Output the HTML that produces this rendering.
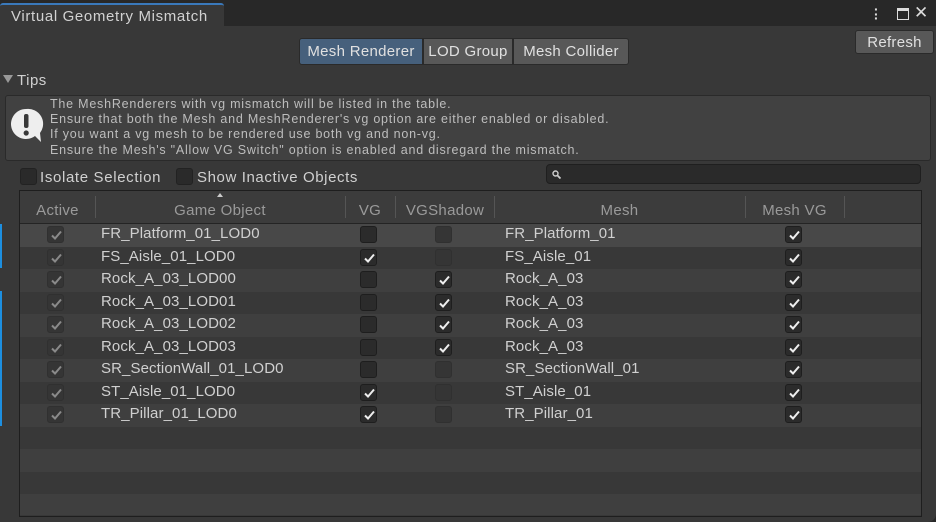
<!DOCTYPE html>
<html><head><meta charset="utf-8"><style>
*{box-sizing:border-box;margin:0;padding:0}
body{width:936px;height:522px;background:#282828;font-family:"Liberation Sans","DejaVu Sans",sans-serif;color:#c4c4c4;position:relative;overflow:hidden}
.a{position:absolute}
.win{left:0;top:26px;width:936px;height:496px;background:#383838;border-bottom-right-radius:8px}
.tab{left:0;top:3px;width:224px;height:24px;background:#383838;border-top:2px solid #3a79bb;border-radius:3px 3px 0 0;font-size:15px;color:#d2d2d2;padding:3px 0 0 11px;letter-spacing:0.65px}
.btn{background:#585858;border:1px solid #2a2a2a;color:#e0e0e0;font-size:15px;text-align:center;line-height:25px;height:27px;top:38px;letter-spacing:0.3px}
.tips{left:5px;top:95px;width:926px;height:66px;background:#414141;border:1px solid #2a2a2a;border-radius:3px}
.tt{left:50px;top:97px;font-size:12.5px;line-height:15.2px;color:#bdbdbd;letter-spacing:0.78px}
.cb{width:17px;height:17px;background:#2a2a2a;border:1px solid #222;border-radius:3px}
.tbl{left:19px;top:190px;width:903px;height:327px;border:1px solid #1e1e1e;background:#383838}
.hd{left:20px;top:191px;width:901px;height:33px;background:#3c3c3c;border-bottom:1px solid #242424}
.hl{font-size:15px;color:#9a9a9a;top:202px;text-align:center;letter-spacing:0.3px}
.sep{top:196px;width:1px;height:22px;background:#555}
.row{left:20px;width:901px;height:22.5px}
.tx{font-size:15px;color:#d0d0d0;letter-spacing:0.1px}
.ck{width:17px;height:17px;background:#2b2b2b;border:1px solid #1e1e1e;border-radius:3px}
.dk{background:#353535;border-color:#303030}
.ck svg{position:absolute;left:1px;top:1px}
</style></head><body>
<div class="a tab">Virtual Geometry Mismatch</div>
<div class="a" style="left:874px;top:7px;width:3px;height:14px;color:#ddd;font-size:14px;line-height:4.5px;font-weight:bold">·<br>·<br>·</div>
<div class="a" style="left:897px;top:8px;width:12px;height:12px;border:1.5px solid #ddd;border-top-width:3px"></div>
<div class="a" style="left:914px;top:3px;font-size:17px;color:#ddd">✕</div>
<div class="a win"></div>
<div class="a btn" style="left:299px;width:124px;background:#46607c;border-radius:3px 0 0 3px">Mesh Renderer</div>
<div class="a btn" style="left:423px;width:90px">LOD Group</div>
<div class="a btn" style="left:513px;width:116px;border-radius:0 3px 3px 0">Mesh Collider</div>
<div class="a btn" style="left:855px;top:30px;width:79px;height:24px;line-height:23px;border-radius:3px;background:#585858">Refresh</div>
<div class="a" style="left:3px;top:75px;width:0;height:0;border-left:5px solid transparent;border-right:5px solid transparent;border-top:8px solid #999"></div>
<div class="a" style="left:17px;top:72px;font-size:15px;color:#d0d0d0;letter-spacing:0.5px">Tips</div>
<div class="a tips"></div>
<svg class="a" style="left:10px;top:107px" width="36" height="38"><path d="M16 2a15 15 0 1 0 9 27l6 6-1-9A15 15 0 0 0 16 2z" fill="#eee"/><rect x="14" y="7" width="4.5" height="14" rx="2" fill="#383838"/><circle cx="16.2" cy="26" r="2.6" fill="#383838"/></svg>
<div class="a tt">The MeshRenderers with vg mismatch will be listed in the table.<br>Ensure that both the Mesh and MeshRenderer's vg option are either enabled or disabled.<br>If you want a vg mesh to be rendered use both vg and non-vg.<br>Ensure the Mesh's "Allow VG Switch" option is enabled and disregard the mismatch.</div>
<div class="a cb" style="left:20px;top:168px"></div>
<div class="a" style="left:40px;top:169px;font-size:15px;color:#d0d0d0;letter-spacing:0.65px">Isolate Selection</div>
<div class="a cb" style="left:176px;top:168px"></div>
<div class="a" style="left:197px;top:169px;font-size:15px;color:#d0d0d0;letter-spacing:0.6px">Show Inactive Objects</div>
<div class="a" style="left:546px;top:164px;width:375px;height:20px;background:#2a2a2a;border:1px solid #1f1f1f;border-radius:4px"></div>
<svg class="a" style="left:552px;top:170px" width="9" height="9"><circle cx="3.5" cy="3.5" r="2.5" stroke="#ccc" stroke-width="1.4" fill="none"/><path d="M5.5 5.5l3 3" stroke="#ccc" stroke-width="1.8"/></svg>
<div class="a tbl"></div>
<div class="a row" style="top:224px;background:#484848"></div>
<div class="a row" style="top:246.5px;background:#383838"></div>
<div class="a row" style="top:269px;background:#3f3f3f"></div>
<div class="a row" style="top:291.5px;background:#383838"></div>
<div class="a row" style="top:314px;background:#3f3f3f"></div>
<div class="a row" style="top:336.5px;background:#383838"></div>
<div class="a row" style="top:359px;background:#3f3f3f"></div>
<div class="a row" style="top:381.5px;background:#383838"></div>
<div class="a row" style="top:404px;background:#3f3f3f"></div>
<div class="a row" style="top:426.5px;background:#383838"></div>
<div class="a row" style="top:449px;background:#3f3f3f"></div>
<div class="a row" style="top:471.5px;background:#383838"></div>
<div class="a row" style="top:494px;height:21px;background:#3f3f3f"></div>
<div class="a hd"></div>
<div class="a hl" style="left:20px;width:75px">Active</div>
<div class="a hl" style="left:95px;width:250px">Game Object</div>
<div class="a" style="left:217px;top:193px;width:0;height:0;border-left:3px solid transparent;border-right:3px solid transparent;border-bottom:4px solid #ccc"></div>
<div class="a hl" style="left:345px;width:50px">VG</div>
<div class="a hl" style="left:395px;width:100px">VGShadow</div>
<div class="a hl" style="left:494px;width:251px">Mesh</div>
<div class="a hl" style="left:745px;width:99px">Mesh VG</div>
<div class="a sep" style="left:95px"></div><div class="a sep" style="left:345px"></div><div class="a sep" style="left:395px"></div><div class="a sep" style="left:494px"></div><div class="a sep" style="left:745px"></div><div class="a sep" style="left:844px"></div>
<div class="a" style="left:0;top:224px;width:2px;height:44px;background:#1d8fe0"></div>
<div class="a" style="left:0;top:291px;width:2px;height:135px;background:#1d8fe0"></div>

<svg width="0" height="0" style="position:absolute"><defs><path id="c" d="M3 7.5l3 3 6-7" fill="none" stroke-width="2"/></defs></svg>

<div class="a" style="left:0;top:-1px">
<div class="a ck dk" style="left:47px;top:227px"><svg width="15" height="15"><use href="#c" stroke="#8a8a8a"/></svg></div>
<div class="a ck dk" style="left:47px;top:249.5px"><svg width="15" height="15"><use href="#c" stroke="#8a8a8a"/></svg></div>
<div class="a ck dk" style="left:47px;top:272px"><svg width="15" height="15"><use href="#c" stroke="#8a8a8a"/></svg></div>
<div class="a ck dk" style="left:47px;top:294.5px"><svg width="15" height="15"><use href="#c" stroke="#8a8a8a"/></svg></div>
<div class="a ck dk" style="left:47px;top:317px"><svg width="15" height="15"><use href="#c" stroke="#8a8a8a"/></svg></div>
<div class="a ck dk" style="left:47px;top:339.5px"><svg width="15" height="15"><use href="#c" stroke="#8a8a8a"/></svg></div>
<div class="a ck dk" style="left:47px;top:362px"><svg width="15" height="15"><use href="#c" stroke="#8a8a8a"/></svg></div>
<div class="a ck dk" style="left:47px;top:384.5px"><svg width="15" height="15"><use href="#c" stroke="#8a8a8a"/></svg></div>
<div class="a ck dk" style="left:47px;top:407px"><svg width="15" height="15"><use href="#c" stroke="#8a8a8a"/></svg></div>
<div class="a ck" style="left:360px;top:227px"></div>
<div class="a ck" style="left:360px;top:249.5px"><svg width="15" height="15"><use href="#c" stroke="#eee"/></svg></div>
<div class="a ck" style="left:360px;top:272px"></div>
<div class="a ck" style="left:360px;top:294.5px"></div>
<div class="a ck" style="left:360px;top:317px"></div>
<div class="a ck" style="left:360px;top:339.5px"></div>
<div class="a ck" style="left:360px;top:362px"></div>
<div class="a ck" style="left:360px;top:384.5px"><svg width="15" height="15"><use href="#c" stroke="#eee"/></svg></div>
<div class="a ck" style="left:360px;top:407px"><svg width="15" height="15"><use href="#c" stroke="#eee"/></svg></div>
<div class="a ck dk" style="left:435px;top:227px"></div>
<div class="a ck dk" style="left:435px;top:249.5px"></div>
<div class="a ck" style="left:435px;top:272px"><svg width="15" height="15"><use href="#c" stroke="#eee"/></svg></div>
<div class="a ck" style="left:435px;top:294.5px"><svg width="15" height="15"><use href="#c" stroke="#eee"/></svg></div>
<div class="a ck" style="left:435px;top:317px"><svg width="15" height="15"><use href="#c" stroke="#eee"/></svg></div>
<div class="a ck" style="left:435px;top:339.5px"><svg width="15" height="15"><use href="#c" stroke="#eee"/></svg></div>
<div class="a ck dk" style="left:435px;top:362px"></div>
<div class="a ck dk" style="left:435px;top:384.5px"></div>
<div class="a ck dk" style="left:435px;top:407px"></div>
<div class="a ck" style="left:785px;top:227px"><svg width="15" height="15"><use href="#c" stroke="#eee"/></svg></div>
<div class="a ck" style="left:785px;top:249.5px"><svg width="15" height="15"><use href="#c" stroke="#eee"/></svg></div>
<div class="a ck" style="left:785px;top:272px"><svg width="15" height="15"><use href="#c" stroke="#eee"/></svg></div>
<div class="a ck" style="left:785px;top:294.5px"><svg width="15" height="15"><use href="#c" stroke="#eee"/></svg></div>
<div class="a ck" style="left:785px;top:317px"><svg width="15" height="15"><use href="#c" stroke="#eee"/></svg></div>
<div class="a ck" style="left:785px;top:339.5px"><svg width="15" height="15"><use href="#c" stroke="#eee"/></svg></div>
<div class="a ck" style="left:785px;top:362px"><svg width="15" height="15"><use href="#c" stroke="#eee"/></svg></div>
<div class="a ck" style="left:785px;top:384.5px"><svg width="15" height="15"><use href="#c" stroke="#eee"/></svg></div>
<div class="a ck" style="left:785px;top:407px"><svg width="15" height="15"><use href="#c" stroke="#eee"/></svg></div>
</div>
<div class="a tx" style="left:101px;top:225px">FR_Platform_01_LOD0</div>
<div class="a tx" style="left:101px;top:247.5px">FS_Aisle_01_LOD0</div>
<div class="a tx" style="left:101px;top:270px">Rock_A_03_LOD00</div>
<div class="a tx" style="left:101px;top:292.5px">Rock_A_03_LOD01</div>
<div class="a tx" style="left:101px;top:315px">Rock_A_03_LOD02</div>
<div class="a tx" style="left:101px;top:337.5px">Rock_A_03_LOD03</div>
<div class="a tx" style="left:101px;top:360px">SR_SectionWall_01_LOD0</div>
<div class="a tx" style="left:101px;top:382.5px">ST_Aisle_01_LOD0</div>
<div class="a tx" style="left:101px;top:405px">TR_Pillar_01_LOD0</div>
<div class="a tx" style="left:505px;top:225px">FR_Platform_01</div>
<div class="a tx" style="left:505px;top:247.5px">FS_Aisle_01</div>
<div class="a tx" style="left:505px;top:270px">Rock_A_03</div>
<div class="a tx" style="left:505px;top:292.5px">Rock_A_03</div>
<div class="a tx" style="left:505px;top:315px">Rock_A_03</div>
<div class="a tx" style="left:505px;top:337.5px">Rock_A_03</div>
<div class="a tx" style="left:505px;top:360px">SR_SectionWall_01</div>
<div class="a tx" style="left:505px;top:382.5px">ST_Aisle_01</div>
<div class="a tx" style="left:505px;top:405px">TR_Pillar_01</div>
</body></html>
